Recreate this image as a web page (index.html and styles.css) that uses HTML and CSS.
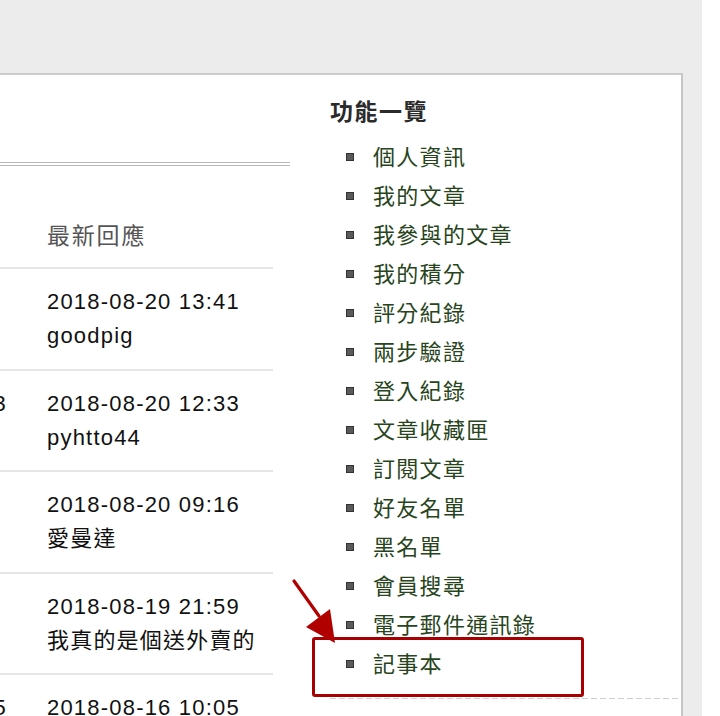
FILE: index.html
```html
<!DOCTYPE html>
<html lang="zh-Hant">
<head>
<meta charset="utf-8">
<title>功能一覽</title>
<link rel="stylesheet" href="styles.css">
</head>
<body>
<div class="page">
  <div class="panel">
    <div class="main">
      <div class="double-rule"></div>
      <table class="topics">
        <thead>
          <tr><th class="c1"></th><th class="c2">最新回應</th></tr>
        </thead>
        <tbody>
          <tr><td class="c1"></td><td class="c2">2018-08-20 13:41<br>goodpig</td></tr>
          <tr><td class="c1">3</td><td class="c2">2018-08-20 12:33<br>pyhtto44</td></tr>
          <tr><td class="c1"></td><td class="c2">2018-08-20 09:16<br>愛曼達</td></tr>
          <tr><td class="c1"></td><td class="c2">2018-08-19 21:59<br>我真的是個送外賣的</td></tr>
          <tr><td class="c1">5</td><td class="c2">2018-08-16 10:05<br>&nbsp;</td></tr>
        </tbody>
      </table>
    </div>
    <div class="sidebar">
      <h3 class="side-title">功能一覽</h3>
      <ul class="menu">
        <li><a href="#">個人資訊</a></li>
        <li><a href="#">我的文章</a></li>
        <li><a href="#">我參與的文章</a></li>
        <li><a href="#">我的積分</a></li>
        <li><a href="#">評分紀錄</a></li>
        <li><a href="#">兩步驗證</a></li>
        <li><a href="#">登入紀錄</a></li>
        <li><a href="#">文章收藏匣</a></li>
        <li><a href="#">訂閱文章</a></li>
        <li><a href="#">好友名單</a></li>
        <li><a href="#">黑名單</a></li>
        <li><a href="#">會員搜尋</a></li>
        <li><a href="#">電子郵件通訊錄</a></li>
        <li><a href="#">記事本</a></li>
      </ul>
      <div class="dashed-rule"></div>
    </div>
  </div>
</div>
<div class="highlight-box"></div>
<svg class="arrow" width="60" height="70" viewBox="0 0 60 70">
  <line x1="4" y1="5" x2="29" y2="40" stroke="#b00000" stroke-width="3.2" stroke-linecap="round"/>
  <polygon points="45,67 16,51 40,33" fill="#b00000"/>
</svg>
</body>
</html>
```
FILE: styles.css
```css
html, body {
  margin: 0;
  padding: 0;
  background: #ffffff;
  overflow: hidden;
}
body {
  width: 720px;
  height: 716px;
  position: relative;
  font-family: "Liberation Sans", "Noto Sans CJK TC", sans-serif;
}
.page {
  width: 702px;
  height: 716px;
  background: #ececec;
  padding-top: 73px;
  box-sizing: border-box;
}
.panel {
  width: 683px;
  height: 643px;
  box-sizing: border-box;
  background: #ffffff;
  border-top: 2px solid #cbcbcb;
  border-right: 2px solid #c6c6c6;
  display: flex;
  overflow: hidden;
}
.main {
  flex: none;
  width: 350px;
  margin-left: -60px;
}
.double-rule {
  margin-top: 87px;
  height: 2px;
  border-top: 1px solid #b9b9b9;
  border-bottom: 1px solid #b9b9b9;
}
.topics {
  width: 333px;
  border-collapse: collapse;
  font-size: 22px;
  letter-spacing: 1.2px;
  color: #111;
}
.topics th {
  font-weight: normal;
  font-size: 23px;
  letter-spacing: 1.8px;
  color: #555;
  text-align: left;
  padding: 55px 0 16px 0;
  line-height: 30px;
  border-bottom: 2px solid #e6e6e6;
}
.topics td {
  padding: 16px 0 15.5px 0;
  line-height: 34px;
  border-bottom: 2px solid #e6e6e6;
  vertical-align: top;
}
.topics .c1 {
  width: 67px;
  padding-right: 40px;
  text-align: right;
  vertical-align: top;
}
.topics .c2 {
  text-align: left;
  white-space: nowrap;
}
.sidebar {
  flex: none;
  width: 350px;
  margin-left: 40px;
}
.side-title {
  margin: 22px 0 0 0;
  font-size: 23px;
  line-height: 30px;
  font-weight: bold;
  letter-spacing: 1.5px;
  color: #2b2b2b;
}
.menu {
  list-style: none;
  margin: 10.5px 0 0 0;
  padding: 0;
}
.menu li {
  display: flex;
  align-items: center;
  height: 39px;
  font-size: 22px;
  letter-spacing: 1.3px;
}
.menu li::before {
  content: "";
  flex: none;
  width: 6px;
  height: 6px;
  background: #5a5a5a;
  border: 1px solid #333;
  margin-left: 16px;
  margin-right: 19px;
}
.menu a {
  color: #27441c;
  text-decoration: none;
  line-height: 39px;
}
.dashed-rule {
  margin-top: 14.5px;
  height: 1px;
  background: repeating-linear-gradient(to right, #cfcfcf 0 6px, transparent 6px 9px);
}
.highlight-box {
  position: absolute;
  left: 312px;
  top: 637px;
  width: 266px;
  height: 54px;
  border: 3px solid #a80000;
  border-radius: 3px;
}
.arrow {
  position: absolute;
  left: 290px;
  top: 576px;
}
```
